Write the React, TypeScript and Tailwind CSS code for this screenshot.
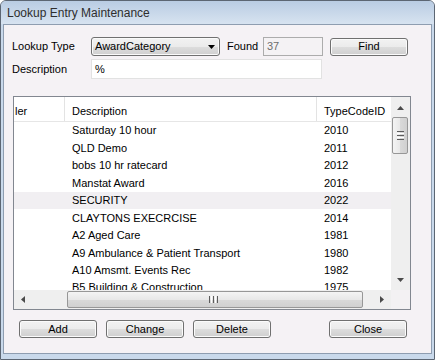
const rows: [string, string][] = [
  ["Saturday 10 hour", "2010"],
  ["QLD Demo", "2011"],
  ["bobs 10 hr ratecard", "2012"],
  ["Manstat Award", "2016"],
  ["SECURITY", "2022"],
  ["CLAYTONS EXECRCISE", "2014"],
  ["A2 Aged Care", "1981"],
  ["A9 Ambulance & Patient Transport", "1980"],
  ["A10 Amsmt. Events Rec", "1982"],
  ["B5 Building & Construction", "1975"],
]

const btn =
  "h-[18px] flex items-center justify-center rounded-[3px] border border-[#707070] bg-[linear-gradient(to_bottom,#f2f2f2_0%,#ebebeb_50%,#dddddd_51%,#cfcfcf_100%)] shadow-[inset_0_0_0_1px_#fbfbfb]"

const Tri = ({ dir }: { dir: "up" | "down" | "left" | "right" }) => {
  const pts = {
    up: "0,4 7,4 3.5,0",
    down: "0,0 7,0 3.5,4",
    left: "4,0 4,7 0,3.5",
    right: "0,0 0,7 4,3.5",
  }[dir]
  const w = dir === "up" || dir === "down" ? 7 : 4
  const h = dir === "up" || dir === "down" ? 4 : 7
  return (
    <svg width={w} height={h} viewBox={`0 0 ${w} ${h}`}>
      <polygon points={pts} fill="#4a4a4a" />
    </svg>
  )
}

export default function App() {
  return (
    <div className="w-[435px] h-[360px] bg-white">
      <div className="w-[435px] h-[360px] flex flex-col border border-[#5c6673] rounded-t-[6px] bg-[#c9d9eb] overflow-hidden font-['Liberation_Sans',Arial,sans-serif] text-[11px] text-black">
        {/* title bar */}
        <div className="h-[23px] shrink-0 flex items-center pl-[6px] text-[12px] text-[#2e2e2e] bg-[linear-gradient(to_bottom,#b9cce3,#d7e3f0)]">
          Lookup Entry Maintenance
        </div>

        {/* client area */}
        <div className="flex-1 mx-[2px] mb-[5px] border border-[#8e9db0] bg-[#f5f2f5] flex flex-col pl-[8px] pt-[12px]">
          {/* lookup type row */}
          <div className="h-[19px] flex items-center">
            <div className="w-[79px]">Lookup Type</div>
            <div className="w-[129px] h-[19px] flex items-center justify-between pl-[3px] pr-[3px] rounded-[3px] border border-[#707070] bg-[linear-gradient(to_bottom,#f2f2f2_0%,#ebebeb_50%,#dddddd_51%,#cfcfcf_100%)] shadow-[inset_0_0_0_1px_#fafafa]">
              <span>AwardCategory</span>
              <span className="mr-[1px] mt-[1px]">
                <svg width="7" height="4" viewBox="0 0 7 4">
                  <polygon points="0,0 7,0 3.5,4" fill="#000" />
                </svg>
              </span>
            </div>
            <div className="ml-[7px] w-[36px]">Found</div>
            <div className="w-[60px] h-[19px] flex items-center pl-[3px] border border-[#acacac] bg-[#f4f2f4] text-[#6d6d6d]">
              37
            </div>
            <div className={`ml-[7px] w-[78px] ${btn} border-[#3c7fb1] shadow-[inset_0_0_0_1px_#a8daf6]`}>Find</div>
          </div>

          {/* description row */}
          <div className="mt-[3px] h-[20px] flex items-center">
            <div className="w-[79px]">Description</div>
            <div className="w-[231px] h-[20px] flex items-center pl-[3px] border border-[#e2e2e2] bg-white">%</div>
          </div>

          {/* grid */}
          <div className="mt-[17px] ml-[1px] w-[398px] h-[214px] border border-[#828790] bg-white flex">
            <div className="w-[377px] flex flex-col">
              {/* header */}
              <div className="h-[25px] shrink-0 flex border-b border-[#e6e6e6] bg-white">
                <div className="w-[51px] border-r border-[#e3e3e3] flex items-center pt-[4px] pl-[1px] overflow-hidden">ler</div>
                <div className="w-[252px] border-r border-[#e3e3e3] flex items-center pt-[4px] pl-[7px]">Description</div>
                <div className="flex-1 flex items-center pt-[4px] pl-[7px]">TypeCodeID</div>
              </div>
              {/* rows */}
              <div className="h-[168px] overflow-hidden">
                {rows.map(([d, id], i) => (
                  <div key={i} className={`h-[17.45px] flex items-center ${i === 4 ? "bg-[#f1eff2]" : ""}`}>
                    <div className="w-[51px]" />
                    <div className="w-[252px] pl-[7px] whitespace-nowrap">{d}</div>
                    <div className="pl-[7px]">{id}</div>
                  </div>
                ))}
              </div>
              {/* horizontal scroll */}
              <div className="h-[19px] shrink-0 flex items-center bg-[#efefef] relative">
                <div className="w-[18px] h-[19px] flex items-center justify-center">
                  <Tri dir="left" />
                </div>
                <div className="ml-[35px] w-[296px] h-[17px] rounded-[2px] border border-[#979797] bg-[linear-gradient(to_bottom,#f4f4f4_0%,#e8e8e8_50%,#d9d9d9_51%,#d0d0d0_100%)] flex items-center justify-center">
                  <div className="flex gap-[1px] ml-[-3px]">
                    <div className="w-[1px] h-[7px] bg-[#5c5c5c]" />
                    <div className="w-[1px] h-[7px] bg-white" />
                    <div className="w-[1px] h-[7px] bg-[#5c5c5c]" />
                    <div className="w-[1px] h-[7px] bg-white" />
                    <div className="w-[1px] h-[7px] bg-[#5c5c5c]" />
                  </div>
                </div>
                <div className="ml-auto w-[18px] h-[19px] flex items-center justify-center">
                  <Tri dir="right" />
                </div>
              </div>
            </div>

            {/* vertical scroll */}
            <div className="w-[19px] flex flex-col">
              <div className="h-[193px] flex flex-col bg-[#efefef]">
                <div className="h-[17px] flex items-center justify-center pt-[5px]">
                  <Tri dir="up" />
                </div>
                <div className="flex-1 flex flex-col">
                  <div className="mt-[3px] ml-[1px] w-[16px] h-[37px] rounded-[2px] border border-[#979797] bg-[linear-gradient(to_right,#f4f4f4_0%,#e8e8e8_50%,#d9d9d9_51%,#d0d0d0_100%)] flex flex-col items-center justify-center gap-[1px]">
                    <div className="w-[7px] h-[1px] bg-[#5c5c5c]" />
                    <div className="w-[7px] h-[1px] bg-white" />
                    <div className="w-[7px] h-[1px] bg-[#5c5c5c]" />
                    <div className="w-[7px] h-[1px] bg-white" />
                    <div className="w-[7px] h-[1px] bg-[#5c5c5c]" />
                  </div>
                </div>
                <div className="h-[17px] flex items-center justify-center pb-[3px]">
                  <Tri dir="down" />
                </div>
              </div>
              <div className="h-[19px] bg-[#f3f1f3]" />
            </div>
          </div>

          {/* buttons */}
          <div className="mt-[10px] flex">
            <div className={`ml-[7px] w-[78px] ${btn}`}>Add</div>
            <div className={`ml-[9px] w-[78px] ${btn}`}>Change</div>
            <div className={`ml-[9px] w-[78px] ${btn}`}>Delete</div>
            <div className={`ml-[58px] w-[78px] ${btn}`}>Close</div>
          </div>
        </div>
      </div>
    </div>
  )
}
